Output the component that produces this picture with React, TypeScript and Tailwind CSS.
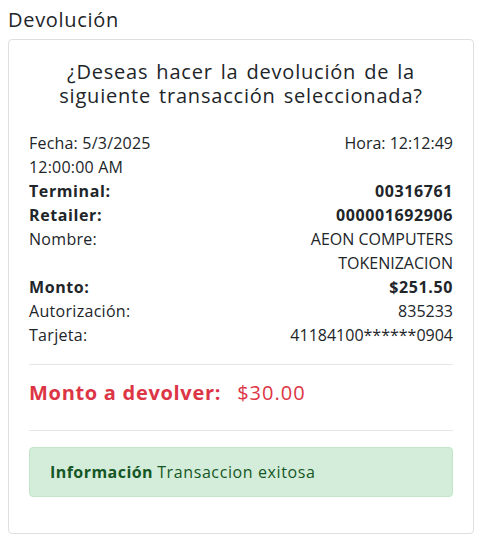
import React from "react";

const rows: { label: string; value: React.ReactNode; bold?: boolean }[] = [
  { label: "Terminal:", value: "00316761", bold: true },
  { label: "Retailer:", value: "000001692906", bold: true },
  { label: "Nombre:", value: <>AEON COMPUTERS<br />TOKENIZACION</> },
  { label: "Monto:", value: "$251.50", bold: true },
  { label: "Autorización:", value: "835233" },
  { label: "Tarjeta:", value: "41184100******0904" },
];

export default function App() {
  return (
    <div
      className="min-h-[544px] bg-white pl-2 pr-[3px] pt-2 text-[#212529]"
      style={{ fontFamily: '"Open Sans", sans-serif' }}
    >
      <h5 className="mb-[7px] text-[20px] leading-[24px] tracking-[0.7px]">Devolución</h5>
      <div className="rounded border border-[#dfdfdf] p-5">
        <h5 className="text-center text-[20px] leading-[24px] tracking-[0.8px] [word-spacing:2px]">
          ¿Deseas hacer la devolución de la
          <br />
          siguiente transacción seleccionada?
        </h5>
        <div className="mt-[23px] text-[16px] leading-[24px]">
          <div className="grid grid-cols-2">
            <div className="tracking-[0.2px]">
              Fecha: 5/3/2025
              <br />
              12:00:00 AM
            </div>
            <div className="text-right">Hora: 12:12:49</div>
          </div>
          {rows.map((r) => (
            <div
              key={r.label}
              className={r.bold ? "grid grid-cols-2 font-bold tracking-[0.6px]" : "grid grid-cols-2"}
            >
              <div className={r.bold ? "" : "tracking-[0.3px]"}>{r.label}</div>
              <div className="text-right">{r.value}</div>
            </div>
          ))}
        </div>
        <div className="mt-[17px] mb-4 h-px bg-[#e6e6e6]" />
        <div className="mb-[25px] text-[20px] leading-[24px] text-[#dc3545]">
          <span className="font-bold tracking-[0.7px]">Monto a devolver:</span>
          <span className="ml-4 tracking-[1px]">$30.00</span>
        </div>
        <div className="mb-4 h-px bg-[#e6e6e6]" />
        <div className="mb-4 rounded border border-[#c3e6cb] bg-[#d4edda] px-5 py-3 text-[16px] leading-[24px] text-[#155724]">
          <span className="font-bold tracking-[0.45px]">Información</span>{" "}
          <span className="tracking-[0.6px]">Transaccion exitosa</span>
        </div>
      </div>
    </div>
  );
}
